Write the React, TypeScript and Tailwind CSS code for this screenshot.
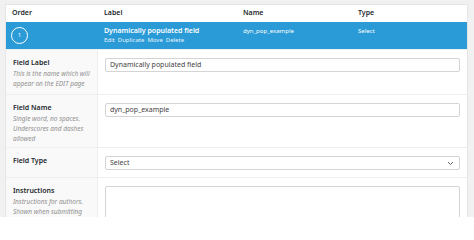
const FONT = "font-['Noto_Sans','Open_Sans',sans-serif]";

function Row({
  title,
  desc,
  height,
  children,
}: {
  title: string;
  desc?: string[];
  height: string;
  children: React.ReactNode;
}) {
  return (
    <div className={`flex border-t border-[#eeeeee] ${height}`}>
      <div className="w-[92px] shrink-0 border-r border-[#eeeeee] bg-[#f9f9f9] pl-[7px] pt-[8px]">
        <div className="text-[7px] font-semibold leading-[10px] text-[#23282d]">{title}</div>
        {desc && (
          <div className="mt-[1px] text-[6.5px] italic leading-[10px] text-[#8f8f8f]">
            {desc.map((d) => (
              <div key={d}>{d}</div>
            ))}
          </div>
        )}
      </div>
      <div className="flex-1 px-[7px] pt-[8px]">{children}</div>
    </div>
  );
}

function TextBox({ value }: { value: string }) {
  return (
    <div className="flex h-[14px] items-center rounded-[2px] border border-[#d4d4d4] px-[4px] text-[7px] text-[#444]">
      {value}
    </div>
  );
}

export default function App() {
  return (
    <div className={`h-[217px] w-[474px] overflow-hidden bg-[#f1f1f1] pl-[5px] pr-[6px] pt-[4px] ${FONT}`}>
      <div className="h-full border border-b-0 border-[#e5e5e5] bg-white">
        {/* table header */}
        <div className="flex h-[17px] items-center text-[7px] font-semibold text-[#23282d]">
          <div className="w-[98px] pl-[6px]">Order</div>
          <div className="w-[139px]">Label</div>
          <div className="w-[115px]">Name</div>
          <div>Type</div>
        </div>

        {/* active field row */}
        <div className="flex h-[27px] bg-[#2a9bd7] text-white">
          <div className="flex w-[98px] items-center pl-[5px]">
            <div className="flex h-[17px] w-[17px] items-center justify-center rounded-full border border-white text-[6px]">
              1
            </div>
          </div>
          <div className="w-[139px] pt-[4px]">
            <div className="text-[7px] font-semibold leading-[10px]">Dynamically populated field</div>
            <div className="flex gap-[3px] text-[6px] leading-[9px] text-[#e6f3fb]">
              <span>Edit</span>
              <span>Duplicate</span>
              <span>Move</span>
              <span>Delete</span>
            </div>
          </div>
          <div className="w-[115px] pt-[4px] text-[6px] leading-[10px]">dyn_pop_example</div>
          <div className="pt-[4px] text-[6px] leading-[10px]">Select</div>
        </div>

        <Row title="Field Label" desc={["This is the name which will", "appear on the EDIT page"]} height="h-[45px]">
          <TextBox value="Dynamically populated field" />
        </Row>
        <Row
          title="Field Name"
          desc={["Single word, no spaces.", "Underscores and dashes", "allowed"]}
          height="h-[53px]"
        >
          <TextBox value="dyn_pop_example" />
        </Row>
        <Row title="Field Type" height="h-[30px]">
          <div className="flex h-[14px] items-center justify-between rounded-[2px] border border-[#d4d4d4] px-[4px] text-[7px] text-[#444]">
            <span>Select</span>
            <svg width="7" height="5" viewBox="0 0 7 5" className="mr-[1px]">
              <path d="M1 1l2.5 2.5L6 1" fill="none" stroke="#666" strokeWidth="1" />
            </svg>
          </div>
        </Row>
        <Row
          title="Instructions"
          desc={["Instructions for authors.", "Shown when submitting"]}
          height="h-[60px]"
        >
          <div className="h-[60px] rounded-[2px] border border-[#d4d4d4]" />
        </Row>
      </div>
    </div>
  );
}
